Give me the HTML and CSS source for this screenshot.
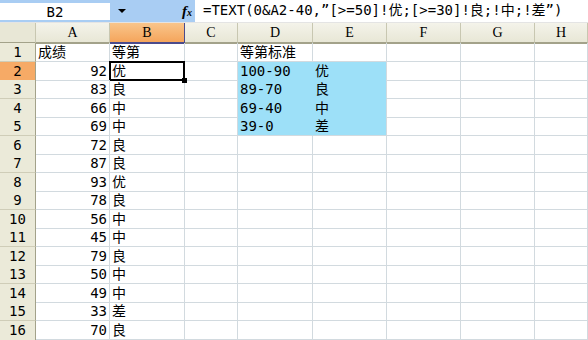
FILE: index.html
```html
<!DOCTYPE html>
<html>
<head>
<meta charset="utf-8">
<link rel="stylesheet" href="styles.css">
</head>
<body>
<div class="app">
  <div class="fbar">
    <div class="namearea">
      <div class="namebox">B2</div>
      <div class="drop"></div>
      <div class="fx"><i>f</i><span>x</span></div>
    </div>
    <div class="formula">=TEXT(0&amp;A2-40,”[&gt;=50]!优;[&gt;=30]!良;!中;!差”)</div>
  </div>
  <div class="sheet">
    <div class="row head">
      <div class="c corner"></div><div class="c ch">A</div><div class="c ch sel">B</div><div class="c ch">C</div><div class="c ch">D</div><div class="c ch">E</div><div class="c ch">F</div><div class="c ch">G</div><div class="c ch">H</div>
    </div>
    <div class="row"><div class="c rh">1</div><div class="c">成绩</div><div class="c">等第</div><div class="c"></div><div class="c">等第标准</div><div class="c"></div><div class="c"></div><div class="c"></div><div class="c"></div></div>
    <div class="row"><div class="c rh sel">2</div><div class="c num">92</div><div class="c active">优</div><div class="c"></div><div class="c hl">100-90</div><div class="c hl hle">优</div><div class="c"></div><div class="c"></div><div class="c"></div></div>
    <div class="row"><div class="c rh">3</div><div class="c num">83</div><div class="c">良</div><div class="c"></div><div class="c hl">89-70</div><div class="c hl hle">良</div><div class="c"></div><div class="c"></div><div class="c"></div></div>
    <div class="row"><div class="c rh">4</div><div class="c num">66</div><div class="c">中</div><div class="c"></div><div class="c hl">69-40</div><div class="c hl hle">中</div><div class="c"></div><div class="c"></div><div class="c"></div></div>
    <div class="row"><div class="c rh">5</div><div class="c num">69</div><div class="c">中</div><div class="c"></div><div class="c hl hlb">39-0</div><div class="c hl hle hlb">差</div><div class="c"></div><div class="c"></div><div class="c"></div></div>
    <div class="row"><div class="c rh">6</div><div class="c num">72</div><div class="c">良</div><div class="c"></div><div class="c"></div><div class="c"></div><div class="c"></div><div class="c"></div><div class="c"></div></div>
    <div class="row"><div class="c rh">7</div><div class="c num">87</div><div class="c">良</div><div class="c"></div><div class="c"></div><div class="c"></div><div class="c"></div><div class="c"></div><div class="c"></div></div>
    <div class="row"><div class="c rh">8</div><div class="c num">93</div><div class="c">优</div><div class="c"></div><div class="c"></div><div class="c"></div><div class="c"></div><div class="c"></div><div class="c"></div></div>
    <div class="row"><div class="c rh">9</div><div class="c num">78</div><div class="c">良</div><div class="c"></div><div class="c"></div><div class="c"></div><div class="c"></div><div class="c"></div><div class="c"></div></div>
    <div class="row"><div class="c rh">10</div><div class="c num">56</div><div class="c">中</div><div class="c"></div><div class="c"></div><div class="c"></div><div class="c"></div><div class="c"></div><div class="c"></div></div>
    <div class="row"><div class="c rh">11</div><div class="c num">45</div><div class="c">中</div><div class="c"></div><div class="c"></div><div class="c"></div><div class="c"></div><div class="c"></div><div class="c"></div></div>
    <div class="row"><div class="c rh">12</div><div class="c num">79</div><div class="c">良</div><div class="c"></div><div class="c"></div><div class="c"></div><div class="c"></div><div class="c"></div><div class="c"></div></div>
    <div class="row"><div class="c rh">13</div><div class="c num">50</div><div class="c">中</div><div class="c"></div><div class="c"></div><div class="c"></div><div class="c"></div><div class="c"></div><div class="c"></div></div>
    <div class="row"><div class="c rh">14</div><div class="c num">49</div><div class="c">中</div><div class="c"></div><div class="c"></div><div class="c"></div><div class="c"></div><div class="c"></div><div class="c"></div></div>
    <div class="row"><div class="c rh">15</div><div class="c num">33</div><div class="c">差</div><div class="c"></div><div class="c"></div><div class="c"></div><div class="c"></div><div class="c"></div><div class="c"></div></div>
    <div class="row"><div class="c rh">16</div><div class="c num">70</div><div class="c">良</div><div class="c"></div><div class="c"></div><div class="c"></div><div class="c"></div><div class="c"></div><div class="c"></div></div>
    <div class="row"><div class="c rh"></div><div class="c"></div><div class="c"></div><div class="c"></div><div class="c"></div><div class="c"></div><div class="c"></div><div class="c"></div><div class="c"></div></div>
  </div>
</div>
</body>
</html>
```
FILE: styles.css
```css
html, body {
  margin: 0;
  padding: 0;
  background: #fff;
}
.app {
  width: 588px;
  height: 340px;
  overflow: hidden;
  font-family: "DejaVu Sans Mono", "Noto Sans CJK SC", monospace;
  font-size: 14px;
  color: #000;
}
.fbar {
  display: flex;
  height: 23px;
  border-bottom: 1px solid #e4e4e4;
  box-sizing: border-box;
}
.namearea {
  width: 195px;
  flex: none;
  background: #a9cdf3;
  display: flex;
  align-items: center;
  position: relative;
}
.namebox {
  width: 110px;
  height: 17px;
  margin-top: 1px;
  background: #fff;
  text-align: center;
  line-height: 18px;
  font-size: 14px;
}
.drop {
  width: 0;
  height: 0;
  margin-left: 8px;
  border-left: 4px solid transparent;
  border-right: 4px solid transparent;
  border-top: 4px solid #000;
}
.fx {
  margin-left: auto;
  margin-right: 3px;
  font-family: "Liberation Serif", serif;
  font-size: 14px;
  font-weight: bold;
  line-height: 1;
}
.fx i {
  font-size: 15px;
}
.fx span {
  font-size: 10px;
  font-style: italic;
}
.formula {
  flex: 1;
  padding-left: 8px;
  line-height: 21px;
  white-space: nowrap;
  font-size: 14px;
}
.row {
  display: grid;
  grid-template-columns: 36px 74px 75px 53px 75px 74px 74px 74px 53px;
  height: 18.5px;
}
.row.head {
  height: 20px;
}
.c {
  box-sizing: border-box;
  border-right: 1px solid #d2dadf;
  border-bottom: 1px solid #d2dadf;
  padding-left: 2px;
  line-height: 18px;
  white-space: nowrap;
  position: relative;
}
.head .c {
  background: linear-gradient(#f4f3ea, #e8e7d6);
  border-right: 1px solid #c8c7b1;
  border-bottom: 2px solid #a3a28a;
  text-align: center;
  padding: 0;
  line-height: 19px;
  font-family: "Liberation Serif", serif;
  font-size: 14px;
}
.head .corner {
  background: #e8e7d6;
}
.head .sel {
  background: linear-gradient(#f9c58b, #f5a55c);
  border-right-color: #4b4b8c;
  border-bottom-color: #4b4b8c;
}
.c.rh {
  background: #ebead9;
  border-right: 1px solid #a3a28a;
  border-bottom: 1px solid #cfcdb8;
  text-align: center;
  padding: 0;
}
.c.rh.sel {
  background: #f6aa66;
  border-bottom-color: #4b4b8c;
}
.num {
  text-align: right;
  padding-right: 2px;
}
.hl {
  background: #9de0f8;
  border-bottom-color: #9de0f8;
  border-right-color: #9de0f8;
}
.hle {
  border-right-color: #d2dadf;
}
.hlb {
  border-bottom-color: #d2dadf;
}
.active::after {
  content: "";
  position: absolute;
  left: -1px;
  top: -1px;
  right: -1px;
  bottom: -1px;
  border: 2px solid #000;
}
.active::before {
  content: "";
  position: absolute;
  right: -3px;
  bottom: -3px;
  width: 5px;
  height: 5px;
  background: #000;
  z-index: 2;
}
```
